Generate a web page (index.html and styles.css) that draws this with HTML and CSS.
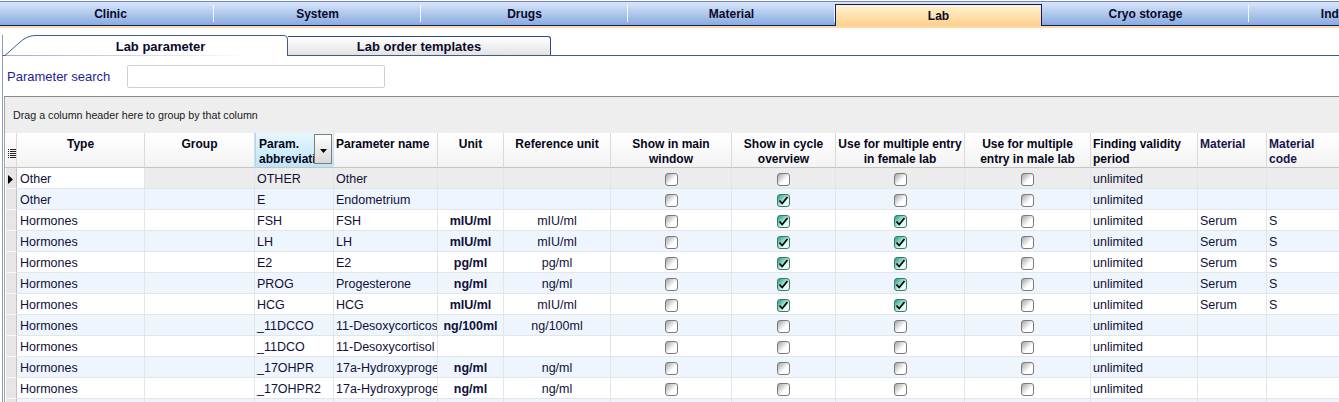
FILE: index.html
```html
<!DOCTYPE html>
<html>
    <head>
        <meta charset="utf-8">
        <title>Lab parameter</title>
        <link rel="stylesheet" href="styles.css">
    </head>
    <body>
        <div class="topbar">
            <div class="tab">Clinic</div>
            <div class="tab">System</div>
            <div class="tab">Drugs</div>
            <div class="tab">Material</div>
            <div class="tab active">Lab</div>
            <div class="tab">Cryo storage</div>
            <div class="tab">Indications</div>
        </div>
        <div class="frame">
            <div class="subtabs">
                <div class="subtab current">
                    <svg class="tabshape" width="283" height="21" viewBox="0 0 283 21">
                        <path d="M0 20.5 L14 8 Q22 0.5 30 0.5 L279 0.5 Q282.5 0.5 282.5 4 L282.5 21" fill="#fff" stroke="#3e5b8e"/>
                    </svg>
                    <span>Lab parameter</span>
                </div>
                <div class="subtab">Lab order templates</div>
            </div>
            <div class="search">
                <label>Parameter search</label>
                <input type="text">
            </div>
            <div class="grid">
                <div class="grouppanel">Drag a column header here to group by that column</div>
                <div class="row head">
                    <div class="ind">
                        <svg width="8" height="10" viewBox="0 0 8 10">
                            <path d="M0 0.5h1M2 0.5h6M0 2.5h1M2 2.5h6M0 4.5h1M2 4.5h6M0 6.5h1M2 6.5h6M0 8.5h1M2 8.5h6" stroke="#222" stroke-width="1"/>
                        </svg>
                    </div>
                    <div class="c">Type</div>
                    <div class="c">Group</div>
                    <div class="sorted">
                        <span class="clip">Param.<br>abbreviation</span>
                        <span class="dropbtn"><svg width="7" height="4" viewBox="0 0 7 4"><path d="M0 0h7L3.5 4z" fill="#000"/></svg></span>
                    </div>
                    <div>Parameter name</div>
                    <div class="c">Unit</div>
                    <div class="c">Reference unit</div>
                    <div class="c">Show in main<br>window</div>
                    <div class="c">Show in cycle<br>overview</div>
                    <div class="c">Use for multiple entry<br>in female lab</div>
                    <div class="c">Use for multiple<br>entry in male lab</div>
                    <div>Finding validity<br>period</div>
                    <div class="navy">Material</div>
                    <div class="navy">Material<br>code</div>
                </div>

                <div class="row cur">
                    <div class="ind"><svg width="5" height="9" viewBox="0 0 5 9"><path d="M0 0L5 4.5L0 9z" fill="#000"/></svg></div>
                    <div class="type">Other</div>
                    <div></div>
                    <div>OTHER</div>
                    <div>Other</div>
                    <div class="c b"></div>
                    <div class="c"></div>
                    <div class="c"><span class="cb"></span></div>
                    <div class="c"><span class="cb"></span></div>
                    <div class="c"><span class="cb"></span></div>
                    <div class="c"><span class="cb"></span></div>
                    <div>unlimited</div>
                    <div></div>
                    <div></div>
                </div>
                <div class="row alt">
                    <div class="ind"></div>
                    <div class="type">Other</div>
                    <div></div>
                    <div>E</div>
                    <div>Endometrium</div>
                    <div class="c b"></div>
                    <div class="c"></div>
                    <div class="c"><span class="cb"></span></div>
                    <div class="c"><span class="cb on"><svg width="11" height="11" viewBox="0 0 11 11"><path d="M1.5 5.5L4.2 8.5L9.5 2" fill="none" stroke="#000" stroke-width="1.7"/></svg></span></div>
                    <div class="c"><span class="cb"></span></div>
                    <div class="c"><span class="cb"></span></div>
                    <div>unlimited</div>
                    <div></div>
                    <div></div>
                </div>
                <div class="row">
                    <div class="ind"></div>
                    <div class="type">Hormones</div>
                    <div></div>
                    <div>FSH</div>
                    <div>FSH</div>
                    <div class="c b">mIU/ml</div>
                    <div class="c">mIU/ml</div>
                    <div class="c"><span class="cb"></span></div>
                    <div class="c"><span class="cb on"><svg width="11" height="11" viewBox="0 0 11 11"><path d="M1.5 5.5L4.2 8.5L9.5 2" fill="none" stroke="#000" stroke-width="1.7"/></svg></span></div>
                    <div class="c"><span class="cb on"><svg width="11" height="11" viewBox="0 0 11 11"><path d="M1.5 5.5L4.2 8.5L9.5 2" fill="none" stroke="#000" stroke-width="1.7"/></svg></span></div>
                    <div class="c"><span class="cb"></span></div>
                    <div>unlimited</div>
                    <div>Serum</div>
                    <div>S</div>
                </div>
                <div class="row alt">
                    <div class="ind"></div>
                    <div class="type">Hormones</div>
                    <div></div>
                    <div>LH</div>
                    <div>LH</div>
                    <div class="c b">mIU/ml</div>
                    <div class="c">mIU/ml</div>
                    <div class="c"><span class="cb"></span></div>
                    <div class="c"><span class="cb on"><svg width="11" height="11" viewBox="0 0 11 11"><path d="M1.5 5.5L4.2 8.5L9.5 2" fill="none" stroke="#000" stroke-width="1.7"/></svg></span></div>
                    <div class="c"><span class="cb on"><svg width="11" height="11" viewBox="0 0 11 11"><path d="M1.5 5.5L4.2 8.5L9.5 2" fill="none" stroke="#000" stroke-width="1.7"/></svg></span></div>
                    <div class="c"><span class="cb"></span></div>
                    <div>unlimited</div>
                    <div>Serum</div>
                    <div>S</div>
                </div>
                <div class="row">
                    <div class="ind"></div>
                    <div class="type">Hormones</div>
                    <div></div>
                    <div>E2</div>
                    <div>E2</div>
                    <div class="c b">pg/ml</div>
                    <div class="c">pg/ml</div>
                    <div class="c"><span class="cb"></span></div>
                    <div class="c"><span class="cb on"><svg width="11" height="11" viewBox="0 0 11 11"><path d="M1.5 5.5L4.2 8.5L9.5 2" fill="none" stroke="#000" stroke-width="1.7"/></svg></span></div>
                    <div class="c"><span class="cb on"><svg width="11" height="11" viewBox="0 0 11 11"><path d="M1.5 5.5L4.2 8.5L9.5 2" fill="none" stroke="#000" stroke-width="1.7"/></svg></span></div>
                    <div class="c"><span class="cb"></span></div>
                    <div>unlimited</div>
                    <div>Serum</div>
                    <div>S</div>
                </div>
                <div class="row alt">
                    <div class="ind"></div>
                    <div class="type">Hormones</div>
                    <div></div>
                    <div>PROG</div>
                    <div>Progesterone</div>
                    <div class="c b">ng/ml</div>
                    <div class="c">ng/ml</div>
                    <div class="c"><span class="cb"></span></div>
                    <div class="c"><span class="cb on"><svg width="11" height="11" viewBox="0 0 11 11"><path d="M1.5 5.5L4.2 8.5L9.5 2" fill="none" stroke="#000" stroke-width="1.7"/></svg></span></div>
                    <div class="c"><span class="cb on"><svg width="11" height="11" viewBox="0 0 11 11"><path d="M1.5 5.5L4.2 8.5L9.5 2" fill="none" stroke="#000" stroke-width="1.7"/></svg></span></div>
                    <div class="c"><span class="cb"></span></div>
                    <div>unlimited</div>
                    <div>Serum</div>
                    <div>S</div>
                </div>
                <div class="row">
                    <div class="ind"></div>
                    <div class="type">Hormones</div>
                    <div></div>
                    <div>HCG</div>
                    <div>HCG</div>
                    <div class="c b">mIU/ml</div>
                    <div class="c">mIU/ml</div>
                    <div class="c"><span class="cb"></span></div>
                    <div class="c"><span class="cb on"><svg width="11" height="11" viewBox="0 0 11 11"><path d="M1.5 5.5L4.2 8.5L9.5 2" fill="none" stroke="#000" stroke-width="1.7"/></svg></span></div>
                    <div class="c"><span class="cb on"><svg width="11" height="11" viewBox="0 0 11 11"><path d="M1.5 5.5L4.2 8.5L9.5 2" fill="none" stroke="#000" stroke-width="1.7"/></svg></span></div>
                    <div class="c"><span class="cb"></span></div>
                    <div>unlimited</div>
                    <div>Serum</div>
                    <div>S</div>
                </div>
                <div class="row alt">
                    <div class="ind"></div>
                    <div class="type">Hormones</div>
                    <div></div>
                    <div>_11DCCO</div>
                    <div>11-Desoxycorticosterone</div>
                    <div class="c b">ng/100ml</div>
                    <div class="c">ng/100ml</div>
                    <div class="c"><span class="cb"></span></div>
                    <div class="c"><span class="cb"></span></div>
                    <div class="c"><span class="cb"></span></div>
                    <div class="c"><span class="cb"></span></div>
                    <div>unlimited</div>
                    <div></div>
                    <div></div>
                </div>
                <div class="row">
                    <div class="ind"></div>
                    <div class="type">Hormones</div>
                    <div></div>
                    <div>_11DCO</div>
                    <div>11-Desoxycortisol</div>
                    <div class="c b"></div>
                    <div class="c"></div>
                    <div class="c"><span class="cb"></span></div>
                    <div class="c"><span class="cb"></span></div>
                    <div class="c"><span class="cb"></span></div>
                    <div class="c"><span class="cb"></span></div>
                    <div>unlimited</div>
                    <div></div>
                    <div></div>
                </div>
                <div class="row alt">
                    <div class="ind"></div>
                    <div class="type">Hormones</div>
                    <div></div>
                    <div>_17OHPR</div>
                    <div>17a-Hydroxyprogesterone</div>
                    <div class="c b">ng/ml</div>
                    <div class="c">ng/ml</div>
                    <div class="c"><span class="cb"></span></div>
                    <div class="c"><span class="cb"></span></div>
                    <div class="c"><span class="cb"></span></div>
                    <div class="c"><span class="cb"></span></div>
                    <div>unlimited</div>
                    <div></div>
                    <div></div>
                </div>
                <div class="row">
                    <div class="ind"></div>
                    <div class="type">Hormones</div>
                    <div></div>
                    <div>_17OHPR2</div>
                    <div>17a-Hydroxyprogesterone</div>
                    <div class="c b">ng/ml</div>
                    <div class="c">ng/ml</div>
                    <div class="c"><span class="cb"></span></div>
                    <div class="c"><span class="cb"></span></div>
                    <div class="c"><span class="cb"></span></div>
                    <div class="c"><span class="cb"></span></div>
                    <div>unlimited</div>
                    <div></div>
                    <div></div>
                </div>
                <div class="row alt">
                    <div class="ind"></div>
                    <div class="type"></div>
                    <div></div><div></div><div></div><div></div><div></div>
                    <div></div><div></div><div></div><div></div><div></div><div></div><div></div>
                </div>
            </div>
        </div>
    </body>
</html>
```

FILE: styles.css
```css
body{
    margin: 0;
    width: 1339px;
    height: 402px;
    overflow: hidden;
    background: #fff;
    font-family: "Liberation Sans", Arial, sans-serif;
    font-size: 12px;
    color: #10103a;
}

/* main module tabs */
.topbar{
    display: flex;
    margin-top: 1px;
    height: 24px;
    padding-left: 7px;
    border-top: 1px solid #7682c2;
    border-bottom: 2px solid #fcdaa6;
    background: linear-gradient(to bottom, #d8e6fa 0, #88abe0 23px, #0c1a6e 23px);
}
.tab{
    flex: 0 0 207px;
    box-sizing: border-box;
    height: 24px;
    padding-top: 2px;
    line-height: 21px;
    text-align: center;
    font-weight: bold;
    color: #0a0a2a;
    border-bottom: 1px solid #0c1a6e;
    background:
        linear-gradient(#f4f8ff, #f4f8ff) no-repeat right 3px / 1px 17px,
        linear-gradient(to bottom, #d8e6fa, #88abe0);
}
.tab.active{
    margin-top: 2px;
    height: 22px;
    padding-top: 1px;
    line-height: 20px;
    border: 1px solid #0c1a6e;
    border-bottom: none;
    background: linear-gradient(to bottom, #fff3d0, #fdcf8c);
}

.frame{
    margin-left: 2px;
    border-left: 1px solid #8b9bc4;
}

/* sub tabs */
.subtabs{
    display: flex;
    margin-top: 7px;
    height: 20px;
    border-bottom: 1px solid #3e5b8e;
}
.subtab{
    box-sizing: border-box;
    width: 263px;
    height: 19px;
    margin-top: 1px;
    padding-top: 2px;
    line-height: 16px;
    text-align: center;
    font-size: 13px;
    font-weight: bold;
    color: #0a0a2a;
    border-top: 1px solid #2c4a8a;
    border-right: 1px solid #2c4a8a;
    border-top-right-radius: 3px;
    background: linear-gradient(to bottom, #ffffff, #e2e2e2);
}
.subtab.current{
    position: relative;
    width: 283px;
    height: 21px;
    margin: 0 0 -1px 2px;
    padding: 3px 0 0 28px;
    line-height: 17px;
    border: none;
    background: none;
}
.tabshape{
    position: absolute;
    left: 0;
    top: 0;
}
.subtab.current span{
    position: relative;
}

/* search */
.search{
    display: flex;
    align-items: center;
    height: 40px;
}
.search label{
    box-sizing: border-box;
    width: 124px;
    padding-left: 4px;
    font-size: 13px;
    color: #1e1e94;
}
.search input{
    box-sizing: border-box;
    width: 258px;
    height: 23px;
    margin: 0;
    border: 1px solid #c8d0d8;
    border-radius: 2px;
    background: #fff;
}

/* grid */
.grid{
    margin-left: 1px;
    border-left: 1px solid #a4a4a4;
    border-top: 1px solid #8a8a8a;
    background: #eeeeee;
}
.grouppanel{
    height: 36px;
    padding-left: 8px;
    line-height: 36px;
    font-size: 10.7px;
    color: #1a1a1a;
}
.row{
    display: grid;
    grid-template-columns: 12px 128px 110px 79px 104px 66px 107px 121px 104px 129px 126px 107px 69px 100px;
    height: 21px;
    background: #fff;
    font-size: 12.5px;
}
.row > div{
    box-sizing: border-box;
    height: 21px;
    padding: 1px 2px 0;
    line-height: 20px;
    white-space: nowrap;
    overflow: hidden;
    border-right: 1px solid #e2e6ea;
    border-bottom: 1px solid #e2e6ea;
}
.row.alt{
    background: #eef5fd;
}
.row.cur{
    background: #ececec;
}
.row.cur .type{
    background: #fff;
}
.row .type{
    padding-left: 3px;
}
.row .c{
    text-align: center;
}
.row .b{
    font-weight: bold;
}
.row > .ind{
    padding: 1px 0 0 3px;
    background: #e6e6e6;
    border-right: 1px solid #c2c2c2;
    border-bottom: 1px solid #f8f8f8;
    box-shadow: inset 1px 0 #fff;
}
.row .ind svg{
    vertical-align: middle;
}

.row.head{
    height: 35px;
    font-size: 12px;
    background: linear-gradient(to bottom, #ffffff, #f3f3f3);
}
.row.head > div{
    height: 35px;
    padding: 4px 2px 0;
    line-height: 15px;
    font-weight: bold;
    color: #050518;
    border-right: 1px solid #dadada;
    border-bottom: 1px solid #c4c4c4;
}
.row.head > .ind{
    padding: 13px 0 0 3px;
    background: linear-gradient(to bottom, #ffffff, #f0f0f0);
}
.row.head > .navy{
    color: #16164c;
}
.row.head > .sorted{
    display: flex;
    padding: 1px 1px 0 3px;
    font-weight: normal;
    background: linear-gradient(to bottom, #e6f6fd, #bde5f8);
    border-left: 1px solid #a6dcf2;
}
.sorted .clip{
    flex: 1;
    padding-top: 3px;
    overflow: hidden;
    white-space: nowrap;
    font-weight: bold;
}
.dropbtn{
    box-sizing: border-box;
    width: 18px;
    height: 30px;
    padding-top: 12px;
    text-align: center;
    line-height: 4px;
    border: 1px solid #7c7c7c;
    background: linear-gradient(to bottom, #ffffff, #d8d8d8);
}

/* checkboxes */
.cb{
    display: inline-block;
    box-sizing: border-box;
    width: 13px;
    height: 13px;
    vertical-align: middle;
    border: 1px solid #7a7a7a;
    border-radius: 3px;
    background: linear-gradient(135deg, #a4a4a4 0%, #ffffff 60%);
    line-height: 0;
}
.cb.on{
    border-color: #3a7a6c;
    background: linear-gradient(135deg, #20a088 0%, #e6fff4 70%);
}
```
